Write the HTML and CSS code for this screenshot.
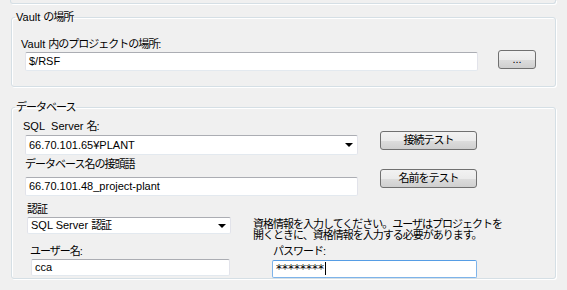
FILE: index.html
```html
<!DOCTYPE html>
<html lang="ja">
<head>
    <meta charset="UTF-8">
    <title>Vault 設定</title>
    <link rel="stylesheet" href="styles.css">
</head>
<body>
    <div class="top-box"></div>

    <fieldset class="group vault-group">
        <legend>Vault <span class="jp">の場所</span></legend>
        <div class="label vault-label">Vault <span class="jp">内のプロジェクトの場所</span>:</div>
        <div class="row">
            <div class="field vault-path">$/RSF</div>
            <div class="btn btn-browse">...</div>
        </div>
    </fieldset>

    <fieldset class="group db-group">
        <legend class="jp">データベース</legend>
        <div class="label sql-label">SQL&nbsp; Server <span class="jp">名</span>:</div>
        <div class="row">
            <div class="field combo server-combo">66.70.101.65¥PLANT<span class="arrow"></span></div>
            <div class="btn btn-test jp">接続テスト</div>
        </div>
        <div class="label prefix-label jp">データベース名の接頭語</div>
        <div class="row">
            <div class="field prefix-field">66.70.101.48_project-plant</div>
            <div class="btn btn-test jp">名前をテスト</div>
        </div>
        <div class="auth">
            <div class="auth-left">
                <div class="label jp">認証</div>
                <div class="field combo auth-combo">SQL Server <span class="jp">認証</span><span class="arrow"></span></div>
                <div class="label user-label"><span class="jp">ユーザー名</span>:</div>
                <div class="field user-field">cca</div>
            </div>
            <div class="auth-right">
                <div class="info jp">資格情報を入力してください。ユーザはプロジェクトを<br>開くときに、資格情報を入力する必要があります。</div>
                <div class="label pass-label"><span class="jp">パスワード</span>:</div>
                <div class="field pass-field">********<span class="caret"></span></div>
            </div>
        </div>
    </fieldset>
</body>
</html>
```

FILE: styles.css
```css
body {
    margin: 0;
    background-color: #f0f0f0;
    font-family: "Liberation Sans", "Noto Sans CJK JP", sans-serif;
    font-size: 11px;
    color: #000;
    width: 567px;
    height: 290px;
    overflow: hidden;
}

/* Japanese glyphs are narrower in the original dialog font */
.jp {
    letter-spacing: -1px;
}

.top-box {
    margin-left: 10px;
    width: 544px;
    height: 3px;
    border: 1px solid #d5dfe5;
    border-top: none;
    border-radius: 0 0 3px 3px;
    box-shadow: 1px 1px 0 #fff;
}

.group {
    margin: 0 0 0 11px;
    width: 543px;
    padding: 0;
    border: 1px solid #d5dfe5;
    border-radius: 3px;
    box-shadow: inset 1px 1px 0 #fff, 1px 1px 0 #fff;
}

.group legend {
    margin-left: 3px;
    padding: 0 1px;
    line-height: 14px;
}

.vault-group {
    margin-top: 6px;
    padding-bottom: 15px;
}

.label {
    line-height: 14px;
    white-space: nowrap;
}

.vault-label {
    margin: 13px 0 0 9px;
}

.row {
    display: flex;
    align-items: flex-start;
}

.field {
    position: relative;
    box-sizing: border-box;
    background: #fff;
    border: 1px solid #e2e3ea;
    border-top-color: #abadb3;
    border-bottom-color: #e3e9ef;
    border-radius: 2px;
    padding-left: 3px;
    white-space: nowrap;
}

.vault-path {
    margin: 1px 0 0 13px;
    width: 453px;
    height: 19px;
    line-height: 17px;
}

.btn {
    box-sizing: border-box;
    border: 1px solid #707070;
    border-radius: 3px;
    background: linear-gradient(#f2f2f2 0%, #ebebeb 50%, #dddddd 51%, #cfcfcf 100%);
    text-align: center;
    white-space: nowrap;
}

.btn-browse {
    margin: -1px 0 0 20px;
    width: 38px;
    height: 19px;
    line-height: 17px;
}

.db-group {
    margin-top: 13px;
    height: 177px;
}

.sql-label {
    margin: 5px 0 0 11px;
}

.combo .arrow {
    position: absolute;
    right: 4px;
    top: 50%;
    margin-top: -2px;
    border-left: 4px solid transparent;
    border-right: 4px solid transparent;
    border-top: 4px solid #000;
}

.server-combo {
    margin: 2px 0 0 13px;
    width: 333px;
    height: 20px;
    line-height: 18px;
}

.btn-test {
    margin-left: 22px;
    width: 97px;
    height: 19px;
    line-height: 17px;
}

.prefix-label {
    margin: 2px 0 0 13px;
}

.prefix-field {
    margin: 6px 0 0 13px;
    width: 333px;
    height: 19px;
    line-height: 17px;
}

.row .btn-test {
    margin-top: -2px;
}

.auth {
    display: flex;
    margin-top: 6px;
}

.auth-left {
    margin-left: 15px;
    width: 204px;
}

.auth-combo {
    margin-top: 1px;
    width: 204px;
    height: 17px;
    line-height: 15px;
}

.user-label {
    margin: 10px 0 0 3px;
}

.user-field {
    margin: 1px 0 0 4px;
    width: 199px;
    height: 17px;
    line-height: 15px;
}

.auth-right {
    margin-left: 22px;
}

.info {
    margin-top: 17px;
    line-height: 11px;
    white-space: nowrap;
}

.pass-label {
    margin: 3px 0 0 20px;
}

.pass-field {
    margin: 2px 0 0 19px;
    width: 205px;
    height: 18px;
    line-height: 16px;
    border-color: #7eb4ea;
    border-top-color: #569de5;
    font-family: "DejaVu Sans", sans-serif;
    font-size: 12px;
}

.caret {
    display: inline-block;
    width: 1px;
    height: 13px;
    margin-left: 1px;
    vertical-align: -2px;
    background: #000;
}
```
